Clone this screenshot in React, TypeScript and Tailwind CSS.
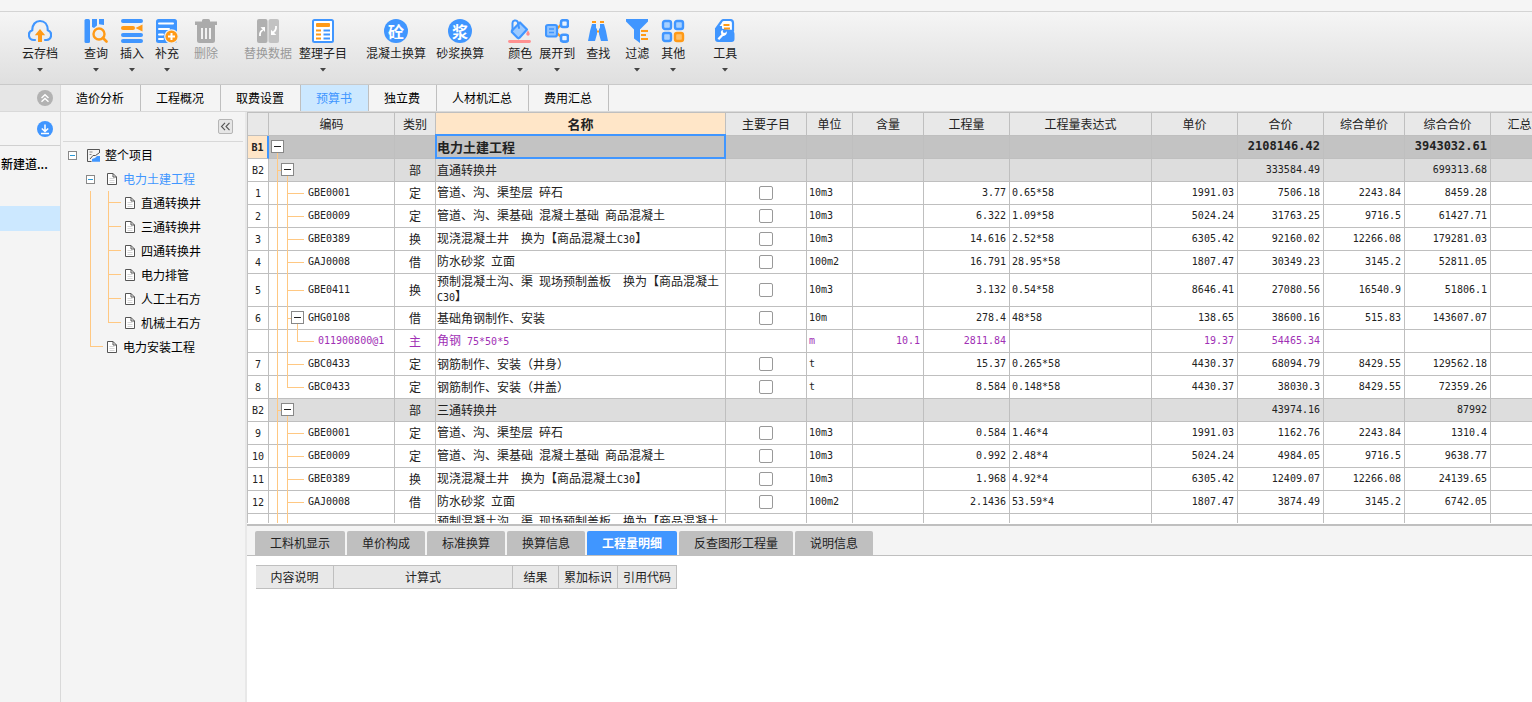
import React from "react";

/* ---------- toolbar icons ---------- */

const B = "#4096ff";
const O = "#ff9a17";

function Svg({ children }: { children: React.ReactNode }) {
  return (
    <svg width="24" height="24" viewBox="0 0 24 24" fill="none" aria-hidden="true">
      {children}
    </svg>
  );
}

const CloudIcon = () => (
  <Svg>
    <path d="M7 21H5.800A5 5 0 0 1 4.200 11.300C4.200 5.500 7.500 2 12 2s7.800 3.500 7.800 9.300A5 5 0 0 1 18.500 21H17" stroke={B} strokeWidth="2.200" strokeLinecap="round" />
    <path d="M12 10l5.200 6.200h-3.200V23h-4v-6.800H6.800z" fill={O} />
  </Svg>
);
const QueryIcon = () => (
  <Svg>
    <rect x="0.500" y="0" width="5.500" height="24" rx="1.500" fill={B} />
    <path d="M8 0h5v6.500l-3 2.500-2-1zM15 0h5v6l-5-.8z" fill={B} />
    <circle cx="15" cy="15" r="5.500" stroke={O} strokeWidth="2.400" />
    <path d="M19 19l3.500 3.500" stroke={O} strokeWidth="2.600" strokeLinecap="round" />
  </Svg>
);
const InsertIcon = () => (
  <Svg>
    <path d="M3 2h18M3 16h18M3 22h18" stroke={B} strokeWidth="4" strokeLinecap="round" />
    <path d="M3 9h10" stroke={O} strokeWidth="4" strokeLinecap="round" />
    <path d="M22.500 5.500v7L15.500 9z" fill={O} />
  </Svg>
);
const SupplementIcon = () => (
  <Svg>
    <rect x="1" y="0" width="21" height="24" rx="2.500" fill={B} />
    <path d="M4 4.500h14M4 10h10M4 15.500h4M4 20h4" stroke="#fff" strokeWidth="2" strokeLinecap="round" />
    <circle cx="16.500" cy="17.500" r="6.700" fill={O} stroke="#eef0f2" strokeWidth="1.200" />
    <path d="M16.500 14v7M13 17.500h7" stroke="#fff" strokeWidth="2" />
  </Svg>
);
const TrashIcon = () => (
  <Svg>
    <path d="M1 2.500h7V1.500A1.500 1.500 0 0 1 9.500 0h5A1.500 1.500 0 0 1 16 1.500v1h7V6H1z" fill="#ababab" />
    <path d="M3 5h18v16.500a2.500 2.500 0 0 1-2.500 2.500h-13A2.500 2.500 0 0 1 3 21.500z" fill="#ababab" />
    <path d="M8 9v11M12 9v11M16 9v11" stroke="#f2f2f2" strokeWidth="2" />
  </Svg>
);
const ReplaceIcon = () => (
  <Svg>
    <rect x="1" y="0" width="10.500" height="24" rx="2" fill="#b0b0b0" />
    <rect x="12.500" y="0" width="10.500" height="24" rx="2" fill="#c2c2c2" />
    <path d="M4 17c-.3-3 .5-5 3-6" stroke="#fff" strokeWidth="1.800" />
    <path d="M4.500 8.200L9 8v5z" fill="#fff" />
    <path d="M20 7c.4 3-.5 5-3 6.500" stroke="#fff" strokeWidth="1.800" />
    <path d="M15 10.800V16h5.300z" fill="#fff" />
  </Svg>
);
const OrganizeIcon = () => (
  <Svg>
    <rect x="2" y="1" width="20" height="22" rx="1.500" fill="#fff" stroke={B} strokeWidth="2" />
    <rect x="5" y="4" width="14" height="4" rx="1" fill={O} />
    <path d="M5 11.500h5M5 15.500h5M5 19.500h5" stroke={O} strokeWidth="2" />
    <path d="M12.500 11.500H19M12.500 15.500H19M12.500 19.500H19" stroke={B} strokeWidth="2" />
  </Svg>
);
const GlyphIcon = ({ glyph }: { glyph: string }) => (
  <span className="flex size-6 items-center justify-center rounded-full bg-[#4096ff] text-[16px] leading-4 font-bold text-white">
    {glyph}
  </span>
);
const ColorIcon = () => (
  <Svg>
    <path d="M4 11.500L12 3.500l7 7-7.500 8.300a1.500 1.500 0 0 1-2 0L3.800 13z" fill="#9ccaff" stroke={B} strokeWidth="2.200" strokeLinejoin="round" />
    <path d="M4.500 11V4.500A2.800 2.800 0 0 1 9.800 3l1.200 6" stroke={B} strokeWidth="2" strokeLinecap="round" />
    <path d="M20 11.500c1.400 2 1.700 2.800 1.700 3.500a1.700 1.700 0 0 1-3.400 0c0-.7.300-1.500 1.700-3.500z" fill="#ff8c8c" />
    <path d="M1.500 22.500h20" stroke="#ff9191" strokeWidth="2.800" strokeLinecap="round" />
  </Svg>
);
const ExpandIcon = () => (
  <Svg>
    <path d="M11 11l5-5.500M11 13l5 5" stroke={O} strokeWidth="2" />
    <rect x="1" y="6" width="11" height="11.500" rx="2" fill="#8fc3ff" stroke={B} strokeWidth="2.200" />
    <path d="M4 10h5M4 13.500h5" stroke={B} strokeWidth="1.600" />
    <rect x="16" y="1.200" width="7" height="6.800" rx="2" fill="#e8f3ff" stroke={B} strokeWidth="2.600" />
    <rect x="16" y="15.800" width="7" height="6.800" rx="2" fill="#e8f3ff" stroke={B} strokeWidth="2.600" />
  </Svg>
);
const FindIcon = () => (
  <Svg>
    <path d="M6 3h4M14 3h4" stroke={O} strokeWidth="2" />
    <path d="M6 5h4v4l1 1v5l-2 7H2l2-10z" fill={B} />
    <path d="M18 5h-4v4l-1 1v5l2 7h7l-2-10z" fill={B} />
    <path d="M11 12.500h2" stroke={O} strokeWidth="2" />
  </Svg>
);
const FilterIcon = () => (
  <Svg>
    <path d="M1 0h22v2.500l-8 8V24l-6-4.500v-9l-8-8z" fill={B} />
    <path d="M15 10h8v13h-8z" fill="#ececec" />
    <path d="M16 12h7M16 16h5M16 20h7" stroke={O} strokeWidth="2" />
  </Svg>
);
const OtherIcon = () => (
  <Svg>
    <rect x="2" y="2" width="8" height="8" rx="2" fill="#a6d0ff" stroke={B} strokeWidth="2.400" />
    <rect x="14" y="2" width="8" height="8" rx="2" fill="#a6d0ff" stroke={B} strokeWidth="2.400" />
    <rect x="2" y="14" width="8" height="8" rx="2" fill="#a6d0ff" stroke={B} strokeWidth="2.400" />
    <rect x="14" y="14" width="8" height="8" rx="2" fill="#ffc069" stroke={O} strokeWidth="2.400" />
  </Svg>
);
const ToolsIcon = () => (
  <Svg>
    <path d="M3 10l5-7a3 3 0 0 1 2.500-2H17a3 3 0 0 1 3 3v8z" fill="#fff" stroke={B} strokeWidth="2.200" strokeLinejoin="round" />
    <path d="M10.500 6h6M11 9.500h6" stroke={O} strokeWidth="2" />
    <path d="M2 10l4-3h3v5h9.500a3 3 0 0 1 3 3v5a3 3 0 0 1-3 3H5a3 3 0 0 1-3-3z" fill={B} />
    <path d="M4.500 19.500l4-4.200a3.400 3.400 0 0 1 1-4.600l.6 2.800 2 .5 1.500-1.800a3.500 3.500 0 0 1-3.600 4.800l-3.800 4z" fill="#fff" />
  </Svg>
);

/* ---------- toolbar ---------- */

type Tool = { label: string; icon: React.ReactNode; gap: string; menu?: boolean; off?: boolean };

const tools: Tool[] = [
  { label: "云存档", icon: <CloudIcon />, gap: "ml-[22px]", menu: true },
  { label: "查询", icon: <QueryIcon />, gap: "ml-[26px]", menu: true },
  { label: "插入", icon: <InsertIcon />, gap: "ml-3", menu: true },
  { label: "补充", icon: <SupplementIcon />, gap: "ml-[11px]", menu: true },
  { label: "删除", icon: <TrashIcon />, gap: "ml-[15px]", off: true },
  { label: "替换数据", icon: <ReplaceIcon />, gap: "ml-[26px]", off: true },
  { label: "整理子目", icon: <OrganizeIcon />, gap: "ml-[7px]", menu: true },
  { label: "混凝土换算", icon: <GlyphIcon glyph="砼" />, gap: "ml-[19px]" },
  { label: "砂浆换算", icon: <GlyphIcon glyph="浆" />, gap: "ml-[10px]" },
  { label: "颜色", icon: <ColorIcon />, gap: "ml-6", menu: true },
  { label: "展开到", icon: <ExpandIcon />, gap: "ml-[7px]", menu: true },
  { label: "查找", icon: <FindIcon />, gap: "ml-[11px]" },
  { label: "过滤", icon: <FilterIcon />, gap: "ml-[15px]", menu: true },
  { label: "其他", icon: <OtherIcon />, gap: "ml-3", menu: true },
  { label: "工具", icon: <ToolsIcon />, gap: "ml-7", menu: true },
];

function Toolbar() {
  return (
    <header className="shrink-0">
      <div className="h-3 border-b border-[#d4d4d4] bg-[#f5f5f5]" />
      <div className="flex h-[73px] items-start border-b border-[#c9c9c9] bg-linear-to-b from-[#f5f5f5] to-[#dfdfdf] pt-[7px]">
        {tools.map((t) => (
          <button
            key={t.label}
            type="button"
            disabled={t.off}
            className={`flex shrink-0 flex-col items-center whitespace-nowrap ${t.gap} ${t.off ? "text-[#999]" : "text-[#222]"}`}
          >
            {t.icon}
            <span className="mt-px leading-[18px]">{t.label}</span>
            {t.menu && (
              <svg className="mt-[6px]" width="6" height="4" viewBox="0 0 6 4" aria-hidden="true">
                <path d="M0 0h6L3 3.500z" fill="#444" />
              </svg>
            )}
          </button>
        ))}
      </div>
    </header>
  );
}

/* ---------- left panels ---------- */

const mainTabs = ["造价分析", "工程概况", "取费设置", "预算书", "独立费", "人材机汇总", "费用汇总"];

function ProjectStrip() {
  return (
    <aside className="flex w-[61px] shrink-0 flex-col overflow-hidden border-r border-[#d9d9d9] bg-[#f4f4f4]">
      <div className="flex h-[27px] items-center justify-end border-b border-[#d9d9d9] bg-[#e6e6e6] pr-[7px]">
        <button type="button" aria-label="收起">
          <svg width="16" height="16" viewBox="0 0 16 16" aria-hidden="true">
            <circle cx="8" cy="8" r="8" fill="#b2b2b2" />
            <path d="M4.500 8L8 4.800 11.500 8M4.500 11.700L8 8.500l3.500 3.200" stroke="#fff" strokeWidth="1.400" fill="none" />
          </svg>
        </button>
      </div>
      <div className="flex h-[34px] items-center justify-end border-b border-[#d0d0d0] pr-[7px]">
        <button type="button" aria-label="下载">
          <svg width="16" height="16" viewBox="0 0 16 16" aria-hidden="true">
            <circle cx="8" cy="8" r="8" fill="#4096ff" />
            <path d="M8 3.500v6.800M4.800 7.500L8 10.500l3.200-3M4 12.500h8" stroke="#fff" strokeWidth="1.500" fill="none" />
          </svg>
        </button>
      </div>
      <div className="flex h-[60px] justify-start pt-2 pl-px text-black">
        <span className="leading-[20px] font-medium whitespace-nowrap">新建道...</span>
      </div>
      <div className="h-[25px] bg-[#cce8ff]" />
    </aside>
  );
}

const PageIcon = () => (
  <svg className="shrink-0" width="10" height="12" viewBox="0 0 10 12" fill="none" aria-hidden="true">
    <path d="M.5.500h5.500L9.500 4v7.500H.5z" fill="#fff" stroke="#555" />
    <path d="M6 .5V4h3.500" stroke="#555" />
    <path d="M2.500 5.500h5M2.500 7.500h5M2.500 9.500h5" stroke="#ccc" strokeWidth=".8" />
  </svg>
);

const Toggle = () => (
  <button type="button" aria-label="折叠" className="flex size-[9px] shrink-0 items-center justify-center border border-[#888] bg-white">
    <span className="h-px w-[5px] bg-[#2b9bd8]" />
  </button>
);

/* A segment of a tree guide: a vertical line with an optional branch to the right. */
function Guide({ kind, width }: { kind: "line" | "tee" | "end"; width: string }) {
  return (
    <span className={`flex h-full shrink-0 flex-col ${width}`} aria-hidden="true">
      <span className={`h-1/2 border-l border-[#ffc882] ${kind === "line" ? "" : "border-b"}`} />
      <span className={`h-1/2 ${kind === "end" ? "" : "border-l border-[#ffc882]"}`} />
    </span>
  );
}

const children = ["直通转换井", "三通转换井", "四通转换井", "电力排管", "人工土石方", "机械土石方"];

function ProjectTree() {
  return (
    <nav className="flex w-[186px] shrink-0 flex-col border-r-2 border-[#e8e8e8] bg-[#f4f4f4] text-black">
      <div className="mx-[2px] flex h-[30px] items-start justify-end border-b border-[#d8d8d8] pt-[7px] pr-[10px]">
        <button type="button" aria-label="隐藏目录" className="flex size-[15px] items-center justify-center rounded-[2px] border border-[#b5b5b5] bg-[#e6e6e6]">
          <svg width="11" height="9" viewBox="0 0 11 9" fill="none" aria-hidden="true">
            <path d="M5 .8L1.500 4.500 5 8.200M9.500 .8L6 4.500l3.500 3.700" stroke="#555" strokeWidth="1.100" />
          </svg>
        </button>
      </div>
      <ul className="pt-px">
        <li className="flex h-6 items-center pl-[7px]">
          <Toggle />
          <svg className="ml-[10px] shrink-0" width="13" height="13" viewBox="0 0 13 13" fill="none" aria-hidden="true">
            <path d="M12.500 4V.5H.5v12h4" stroke="#555" />
            <path d="M2.500 3h3M2.500 5.500h2" stroke="#888" />
            <path d="M3 10l3-3.500h2.500L12 4" stroke="#555" />
            <path d="M5 12.800V10l3-1 2-2h3v5.800z" fill="#4096ff" />
          </svg>
          <span className="ml-[5px]">整个项目</span>
        </li>
        <li className="flex h-6 items-center pl-[25px]">
          <Toggle />
          <span className="ml-3 flex"><PageIcon /></span>
          <span className="ml-[6px] text-[#4096ff]">电力土建工程</span>
        </li>
        {children.map((c, i) => (
          <li key={c} className="flex h-6 items-center pl-[29px]">
            <Guide kind="line" width="w-[18px]" />
            <Guide kind={i === children.length - 1 ? "end" : "tee"} width="w-[13px]" />
            <span className="ml-1 flex"><PageIcon /></span>
            <span className="ml-[6px]">{c}</span>
          </li>
        ))}
        <li className="flex h-6 items-center pl-[29px]">
          <Guide kind="end" width="w-[13px]" />
          <span className="ml-1 flex"><PageIcon /></span>
          <span className="ml-[6px]">电力安装工程</span>
        </li>
      </ul>
    </nav>
  );
}

/* ---------- budget table ---------- */

type Row = {
  no: string;
  kind: "root" | "part" | "item" | "parent" | "material";
  last?: boolean;
  tall?: boolean;
  code?: string;
  type?: string;
  name: string;
  unit?: string;
  content?: string;
  qty?: string;
  expr?: string;
  price?: string;
  total?: string;
  cprice?: string;
  ctotal?: string;
};

const LONG = "预制混凝土沟、渠 现场预制盖板  换为【商品混凝土C30】";

const rows: Row[] = [
  { no: "B1", kind: "root", name: "电力土建工程", total: "2108146.42", ctotal: "3943032.61" },
  { no: "B2", kind: "part", type: "部", name: "直通转换井", total: "333584.49", ctotal: "699313.68" },
  { no: "1", kind: "item", code: "GBE0001", type: "定", name: "管道、沟、渠垫层 碎石", unit: "10m3", qty: "3.77", expr: "0.65*58", price: "1991.03", total: "7506.18", cprice: "2243.84", ctotal: "8459.28" },
  { no: "2", kind: "item", code: "GBE0009", type: "定", name: "管道、沟、渠基础 混凝土基础 商品混凝土", unit: "10m3", qty: "6.322", expr: "1.09*58", price: "5024.24", total: "31763.25", cprice: "9716.5", ctotal: "61427.71" },
  { no: "3", kind: "item", code: "GBE0389", type: "换", name: "现浇混凝土井  换为【商品混凝土C30】", unit: "10m3", qty: "14.616", expr: "2.52*58", price: "6305.42", total: "92160.02", cprice: "12266.08", ctotal: "179281.03" },
  { no: "4", kind: "item", code: "GAJ0008", type: "借", name: "防水砂浆 立面", unit: "100m2", qty: "16.791", expr: "28.95*58", price: "1807.47", total: "30349.23", cprice: "3145.2", ctotal: "52811.05" },
  { no: "5", kind: "item", tall: true, code: "GBE0411", type: "换", name: LONG, unit: "10m3", qty: "3.132", expr: "0.54*58", price: "8646.41", total: "27080.56", cprice: "16540.9", ctotal: "51806.1" },
  { no: "6", kind: "parent", code: "GHG0108", type: "借", name: "基础角钢制作、安装", unit: "10m", qty: "278.4", expr: "48*58", price: "138.65", total: "38600.16", cprice: "515.83", ctotal: "143607.07" },
  { no: "", kind: "material", code: "011900800@1", type: "主", name: "角钢 75*50*5", unit: "m", content: "10.1", qty: "2811.84", price: "19.37", total: "54465.34" },
  { no: "7", kind: "item", code: "GBC0433", type: "定", name: "钢筋制作、安装（井身）", unit: "t", qty: "15.37", expr: "0.265*58", price: "4430.37", total: "68094.79", cprice: "8429.55", ctotal: "129562.18" },
  { no: "8", kind: "item", last: true, code: "GBC0433", type: "定", name: "钢筋制作、安装（井盖）", unit: "t", qty: "8.584", expr: "0.148*58", price: "4430.37", total: "38030.3", cprice: "8429.55", ctotal: "72359.26" },
  { no: "B2", kind: "part", type: "部", name: "三通转换井", total: "43974.16", ctotal: "87992" },
  { no: "9", kind: "item", code: "GBE0001", type: "定", name: "管道、沟、渠垫层 碎石", unit: "10m3", qty: "0.584", expr: "1.46*4", price: "1991.03", total: "1162.76", cprice: "2243.84", ctotal: "1310.4" },
  { no: "10", kind: "item", code: "GBE0009", type: "定", name: "管道、沟、渠基础 混凝土基础 商品混凝土", unit: "10m3", qty: "0.992", expr: "2.48*4", price: "5024.24", total: "4984.05", cprice: "9716.5", ctotal: "9638.77" },
  { no: "11", kind: "item", code: "GBE0389", type: "换", name: "现浇混凝土井  换为【商品混凝土C30】", unit: "10m3", qty: "1.968", expr: "4.92*4", price: "6305.42", total: "12409.07", cprice: "12266.08", ctotal: "24139.65" },
  { no: "12", kind: "item", code: "GAJ0008", type: "借", name: "防水砂浆 立面", unit: "100m2", qty: "2.1436", expr: "53.59*4", price: "1807.47", total: "3874.49", cprice: "3145.2", ctotal: "6742.05" },
  { no: "", kind: "item", tall: true, name: LONG },
];

const MONO = "font-['DejaVu_Sans_Mono',monospace]";

/* Latin runs are set in a monospaced face, two characters to one ideograph. */
function Mixed({ text }: { text: string }) {
  return (
    <>
      {text.split(/([\x20-\x7e]+)/).map((part, i) =>
        i % 2 ? <span key={i} className={`text-[10px] ${MONO}`}>{part}</span> : part
      )}
    </>
  );
}

function FoldBox({ tail }: { tail: boolean }) {
  return (
    <span className="flex h-full w-[13px] shrink-0 flex-col items-center pt-1">
      <button type="button" aria-label="折叠" className="flex size-[13px] shrink-0 items-center justify-center border border-[#888] bg-white">
        <span className="h-px w-[7px] bg-[#222]" />
      </button>
      {tail && <span className="w-px grow bg-[#ffc882]" />}
    </span>
  );
}

function CodeCell({ row }: { row: Row }) {
  const edge = row.last ? "end" : "tee";
  return (
    <div className={`flex items-center ${row.tall ? "h-[33px]" : "h-[23px]"} ${row.kind === "root" ? "pl-[2px]" : "pl-2"}`}>
      {row.kind === "root" && <FoldBox tail />}
      {row.kind === "part" && (
        <>
          <Guide kind="tee" width="w-1" />
          <FoldBox tail />
        </>
      )}
      {row.kind === "item" && (
        <>
          <Guide kind="line" width="w-[10px]" />
          <Guide kind={edge} width="w-[17px]" />
        </>
      )}
      {row.kind === "parent" && (
        <>
          <Guide kind="line" width="w-[10px]" />
          <Guide kind="tee" width="w-1" />
          <FoldBox tail />
        </>
      )}
      {row.kind === "material" && (
        <>
          <Guide kind="line" width="w-[10px]" />
          <Guide kind="line" width="w-[10px]" />
          <Guide kind="end" width="w-[17px]" />
        </>
      )}
      {row.code && <span className={`ml-1 pb-[2px] text-[10px] ${MONO}`}>{row.code}</span>}
    </div>
  );
}

const columns = [
  { t: "", w: "w-[21px]" },
  { t: "编码", w: "w-[126px]" },
  { t: "类别", w: "w-[41px]" },
  { t: "名称", w: "w-[290px]" },
  { t: "主要子目", w: "w-[81px]" },
  { t: "单位", w: "w-[46px]" },
  { t: "含量", w: "w-[71px]" },
  { t: "工程量", w: "w-[86px]" },
  { t: "工程量表达式", w: "w-[142px]" },
  { t: "单价", w: "w-[86px]" },
  { t: "合价", w: "w-[86px]" },
  { t: "综合单价", w: "w-[81px]" },
  { t: "综合合价", w: "w-[86px]" },
  { t: "汇总类别", w: "w-[82px]" },
];

const CELL = "border-r border-b border-[#bfbfbf] p-0";

function BudgetRow({ row }: { row: Row }) {
  const root = row.kind === "root";
  const tone = root
    ? "bg-[#c3c3c3] font-bold"
    : row.kind === "part"
      ? "bg-[#dddddd]"
      : row.kind === "material"
        ? "bg-white text-[#a02fb5]"
        : "bg-white";
  const num = `${CELL} pr-[3px] pb-[2px] text-right ${MONO} ${root ? "text-[12px]" : "text-[10px]"}`;
  const txt = `${CELL} pb-[2px] pl-[2px] text-[10px] ${MONO}`;
  const check = row.kind === "item" || row.kind === "parent";
  return (
    <tr className={`${row.tall ? "h-[33px]" : "h-[23px]"} ${tone}`}>
      <td
        className={`border-b border-[#bfbfbf] p-0 text-center text-[10px] text-[#222] ${MONO} ${root ? "border-r-2 border-r-[#4096ff] bg-[#ffe6c8]" : "border-r bg-white"}`}
      >
        {row.no}
      </td>
      <td className="p-0 shadow-[inset_-1px_-1px_0_#bfbfbf]">
        <CodeCell row={row} />
      </td>
      <td className={`${CELL} pb-[2px] text-center`}>{row.type}</td>
      <td
        className={`${CELL} pb-[2px] pl-px whitespace-pre-wrap ${
          root
            ? "relative text-[13px] after:absolute after:-top-[2px] after:-right-px after:-bottom-px after:-left-px after:z-10 after:border-2 after:border-[#4096ff] after:content-['']"
            : ""
        }`}
      >
        <Mixed text={row.name} />
      </td>
      <td className={`${CELL} text-center`}>
        {check && (
          <input
            type="checkbox"
            aria-label={`主要子目 ${row.no}`}
            className="mx-auto block size-[14px] appearance-none rounded-[2px] border border-[#999] bg-white"
          />
        )}
      </td>
      <td className={txt}>{row.unit}</td>
      <td className={num}>{row.content}</td>
      <td className={num}>{row.qty}</td>
      <td className={txt}>{row.expr}</td>
      <td className={num}>{row.price}</td>
      <td className={num}>{row.total}</td>
      <td className={num}>{row.cprice}</td>
      <td className={num}>{row.ctotal}</td>
      <td className={CELL} />
    </tr>
  );
}

function BudgetTable() {
  return (
    <div className="h-[412px] shrink-0 overflow-hidden">
      <div className="h-[411px] overflow-hidden">
        <table className="w-[1326px] table-fixed border-separate border-spacing-0 border-t border-l border-[#bfbfbf] leading-[13px] text-[#222]">
          <colgroup>
            {columns.map((c, i) => (
              <col key={i} className={c.w} />
            ))}
          </colgroup>
          <thead>
            <tr className="h-[23px]">
              {columns.map((c, i) => (
                <th
                  key={i}
                  scope="col"
                  className={`border-r border-b border-[#bfbfbf] px-0 pt-0 pb-[2px] ${c.t === "名称" ? "bg-[#ffe6c8] text-[13px] font-bold" : "bg-[#e8e8e8] font-normal"}`}
                >
                  {c.t}
                </th>
              ))}
            </tr>
          </thead>
          <tbody>
            {rows.map((r, i) => (
              <BudgetRow key={i} row={r} />
            ))}
          </tbody>
        </table>
      </div>
    </div>
  );
}

/* ---------- detail pane ---------- */

const detailTabs = ["工料机显示", "单价构成", "标准换算", "换算信息", "工程量明细", "反查图形工程量", "说明信息"];
const detailColumns = [
  { t: "内容说明", w: "w-[78px]" },
  { t: "计算式", w: "w-[179px]" },
  { t: "结果", w: "w-[46px]" },
  { t: "累加标识", w: "w-[59px]" },
  { t: "引用代码", w: "w-[59px]" },
];

function DetailPane() {
  return (
    <section className="flex grow flex-col border-t-2 border-[#bfbfbf] bg-white">
      <div role="tablist" className="flex h-[30px] items-end gap-[2px] border-b border-[#bfbfbf] bg-[#f4f4f4] pl-2">
        {detailTabs.map((t) => (
          <button
            key={t}
            type="button"
            role="tab"
            aria-selected={t === "工程量明细"}
            className={`h-6 shrink-0 rounded-t-[2px] px-[15px] ${t === "工程量明细" ? "bg-[#4096ff] font-bold text-white" : "bg-[#bfbfbf] text-[#222]"}`}
          >
            {t}
          </button>
        ))}
      </div>
      <table className="mt-[9px] ml-[9px] w-[421px] table-fixed border-separate border-spacing-0 border-t border-[#bfbfbf] leading-[13px] text-[#222]">
        <thead>
          <tr className="h-[23px]">
            {detailColumns.map((c) => (
              <th key={c.t} scope="col" className={`border-r border-b border-[#bfbfbf] bg-[#e8e8e8] px-0 pt-0 pb-[2px] font-normal whitespace-nowrap ${c.w}`}>
                {c.t}
              </th>
            ))}
          </tr>
        </thead>
      </table>
    </section>
  );
}

export default function App() {
  return (
    <div className="flex h-screen flex-col overflow-hidden bg-[#f4f4f4] font-['Noto_Sans_CJK_SC',sans-serif] text-[12px] leading-[18px]">
      <Toolbar />
      <div className="flex min-h-0 grow">
        <ProjectStrip />
        <div className="flex min-w-0 grow flex-col">
          <div role="tablist" className="flex h-[27px] shrink-0 border-b border-[#d9d9d9]">
            {mainTabs.map((t) => (
              <button
                key={t}
                type="button"
                role="tab"
                aria-selected={t === "预算书"}
                className={`shrink-0 border-r border-[#bfbfbf] pr-4 pl-[15px] ${t === "预算书" ? "bg-[#cce8ff] text-[#4096ff]" : "text-black"}`}
              >
                {t}
              </button>
            ))}
          </div>
          <div className="flex min-h-0 grow">
            <ProjectTree />
            <main className="flex min-w-0 grow flex-col bg-white">
              <BudgetTable />
              <DetailPane />
            </main>
          </div>
        </div>
      </div>
    </div>
  );
}
